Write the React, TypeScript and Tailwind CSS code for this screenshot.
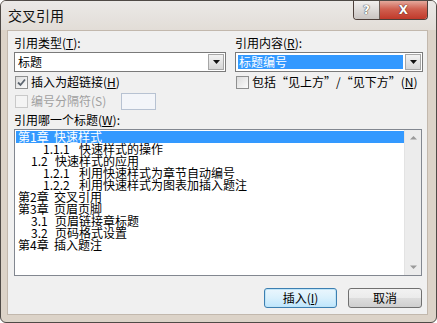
import React from 'react';

const cjk = "font-['Noto_Sans_CJK_SC','Noto_Sans',sans-serif]";

interface CheckProps {
  checked?: boolean;
  disabled?: boolean;
}

const Check: React.FC<CheckProps> = ({ checked, disabled }) => (
  <span
    className={`flex h-[13px] w-[13px] shrink-0 items-center justify-center border ${
      disabled
        ? 'border-[#c9c9c9] bg-[#f4f4f4]'
        : 'border-[#8e8f8f] bg-[linear-gradient(135deg,#dcdcdc,#fbfbfb)]'
    }`}
  >
    {checked && (
      <svg width="9" height="9" viewBox="0 0 9 9">
        <path d="M1 4.5 L3.5 7 L8 1.5" fill="none" stroke="#5d6670" strokeWidth="1.8" />
      </svg>
    )}
  </span>
);

const Arrow: React.FC = () => (
  <span className="my-[1px] mr-[1px] flex w-[16px] items-center justify-center border border-[#a6a6a6] bg-[linear-gradient(180deg,#f2f2f2,#d6d6d6)]">
    <svg width="7" height="4" viewBox="0 0 7 4">
      <path d="M0 0 H7 L3.5 4 Z" fill="#111" />
    </svg>
  </span>
);

// num: numbering part, title: heading text
const headings: { level: number; num: string; title: string }[] = [
  { level: 0, num: '第1章', title: '快速样式' },
  { level: 2, num: '1.1.1', title: '快速样式的操作' },
  { level: 1, num: '1.2', title: '快速样式的应用' },
  { level: 2, num: '1.2.1', title: '利用快速样式为章节自动编号' },
  { level: 2, num: '1.2.2', title: '利用快速样式为图表加插入题注' },
  { level: 0, num: '第2章', title: '交叉引用' },
  { level: 0, num: '第3章', title: '页眉页脚' },
  { level: 1, num: '3.1', title: '页眉链接章标题' },
  { level: 1, num: '3.2', title: '页码格式设置' },
  { level: 0, num: '第4章', title: '插入题注' },
];

const indent = ['pl-[2px]', 'pl-[15px]', 'pl-[27px]'];
const numWidth = ['w-[36px]', 'w-[24px]', 'w-[36px]'];

export default function App() {
  return (
    <div className={`flex h-[323px] w-[437px] flex-col overflow-hidden rounded-[6px] border border-[#4f4a46] bg-[#dcd3c8] ${cjk} text-[12px] text-black`}>
      {/* title bar */}
      <div className="flex h-[29px] items-start justify-between bg-[linear-gradient(180deg,#ebe9e7,#e2ddd7)] pl-[7px] pr-[8px]">
        <span className="mt-[6px] text-[14px] leading-[16px] text-[#111]">交叉引用</span>
        <div className="flex h-[19px] overflow-hidden rounded-b-[4px] border border-t-0 border-[#4d3f3a]">
          <div className="flex w-[26px] items-center justify-center border-r border-[#6b5d57] bg-[linear-gradient(180deg,#f1efee,#c9c4c1)]">
            <span className="font-['DejaVu_Sans',sans-serif] text-[12px] font-bold leading-none text-white [text-shadow:0_0_1px_#333,0_0_1px_#333]">?</span>
          </div>
          <div className="flex w-[47px] items-center justify-center bg-[linear-gradient(180deg,#e5a99c,#d06050_45%,#c0392a)]">
            <span className="font-['DejaVu_Sans',sans-serif] text-[12px] font-bold leading-none text-white [text-shadow:0_0_1px_#4a1a14,0_0_1px_#4a1a14]">X</span>
          </div>
        </div>
      </div>

      {/* client area */}
      <div className="ml-[6px] mr-[8px] flex h-[285px] flex-col border border-[#c2b8ad] bg-[#f0f0f0] pl-[6px] pr-[4px] pt-[5px]">
        <div className="flex gap-[9px]">
          <div className="flex w-[212px] flex-col">
            <div className="h-[14px] leading-[14px]">引用类型(<u>T</u>):</div>
            <div className="mt-[2px] flex h-[20px] border border-[#7a7a7a] bg-white">
              <span className="flex-1 pl-[3px] leading-[18px]">标题</span>
              <Arrow />
            </div>
          </div>
          <div className="flex w-[188px] flex-col">
            <div className="h-[14px] leading-[14px]">引用内容(<u>R</u>):</div>
            <div className="mt-[2px] flex h-[20px] border border-[#7a7a7a] bg-white">
              <span className="m-[2px] flex-1 bg-[#3399ff] pl-[1px] leading-[14px] text-white">标题编号</span>
              <Arrow />
            </div>
          </div>
        </div>

        <div className="mt-[1px] flex h-[18px] items-center gap-[9px]">
          <label className="flex w-[212px] items-center gap-[3px] pl-[1px]">
            <Check checked />
            <span>插入为超链接(<u>H</u>)</span>
          </label>
          <label className="flex items-center gap-[3px] pl-[1px]">
            <Check />
            <span>包括“见上方”/“见下方”(<u>N</u>)</span>
          </label>
        </div>

        <div className="mt-[1px] flex h-[18px] items-center">
          <label className="flex w-[107px] items-center gap-[3px] pl-[1px] text-[#a0a0a0]">
            <Check disabled />
            <span>编号分隔符(S)</span>
          </label>
          <div className="h-[17px] w-[35px] border border-[#b7c2d2] bg-[#f3f5f9]" />
        </div>

        <div className="mt-[3px] h-[14px] leading-[14px]">引用哪一个标题(<u>W</u>):</div>

        <div className="mt-[2px] flex h-[147px] w-[408px] border border-[#828790] bg-white">
          <ul className="flex-1 pl-[1px] pt-[1px]">
            {headings.map((h, i) => (
              <li
                key={i}
                className={`flex h-[12px] items-center whitespace-nowrap text-[12px] leading-[12px] ${indent[h.level]} ${
                  i === 0 ? 'bg-[#3399ff] text-white' : ''
                }`}
              >
                <span className={`${numWidth[h.level]} shrink-0`}>{h.num}</span>
                <span>{h.title}</span>
              </li>
            ))}
          </ul>
          <div className="flex w-[17px] flex-col justify-between border-l border-[#e3e3e3] bg-[#ececec] py-[5px]">
            <svg width="17" height="5" viewBox="0 0 17 5">
              <path d="M5 4.5 H12 L8.5 1 Z" fill="#9a9a9a" />
            </svg>
            <svg width="17" height="5" viewBox="0 0 17 5">
              <path d="M5 0.5 H12 L8.5 4 Z" fill="#9a9a9a" />
            </svg>
          </div>
        </div>

        <div className="mt-[12px] flex w-[408px] justify-end gap-[11px]">
          <button className="h-[20px] w-[73px] rounded-[3px] border border-[#3c7fb1] bg-[linear-gradient(180deg,#eaf6fd,#d9f0fc_50%,#bee6fd)] leading-[18px] shadow-[inset_0_0_0_1px_#bfe4f7]">
            插入(<u>I</u>)
          </button>
          <button className="h-[20px] w-[74px] rounded-[3px] border border-[#707070] bg-[linear-gradient(180deg,#f2f2f2,#ebebeb_50%,#dddddd_51%,#cfcfcf)] leading-[18px]">
            取消
          </button>
        </div>
      </div>
    </div>
  );
}
